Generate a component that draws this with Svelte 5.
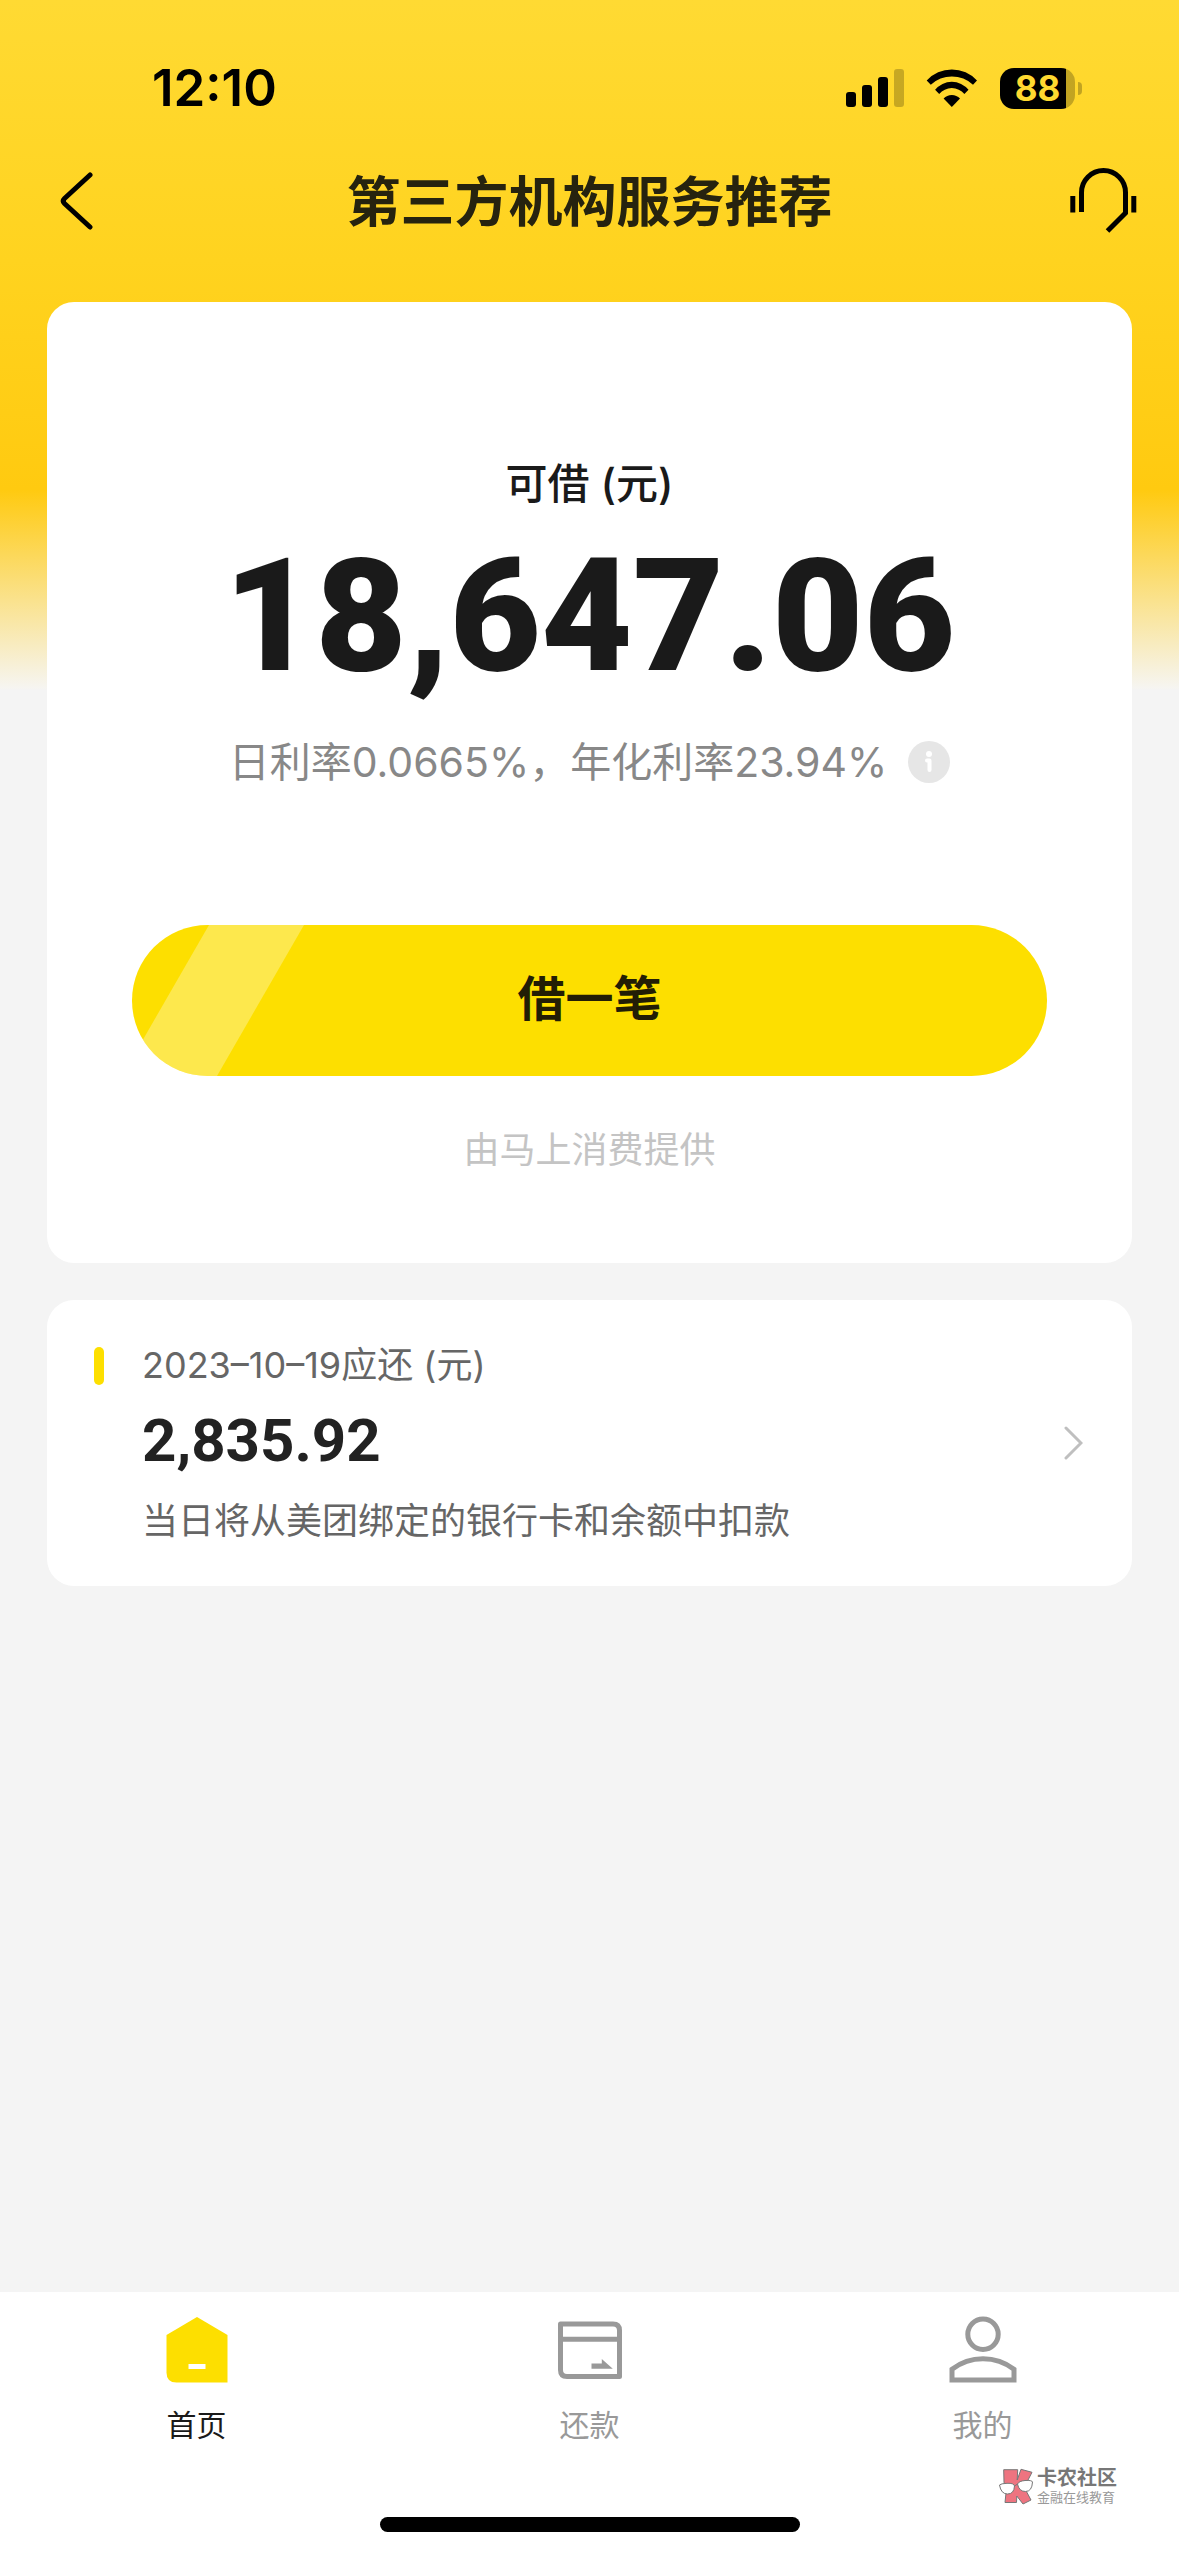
<script>
  const loan = {
    available: '18,647.06',
    daily: '0.0665%',
    yearly: '23.94%',
    provider: '由马上消费提供',
  };
  const bill = { date: '2023–10–19', amount: '2,835.92' };
  const tabs = [
    { id: 'home', label: '首页' },
    { id: 'repay', label: '还款' },
    { id: 'me', label: '我的' },
  ];
  let active = $state('home');
</script>

<div class="page">
  <div class="status">
    <span class="time">12:10</span>
    <div class="indicators">
      <svg class="signal" viewBox="0 0 58 38" aria-hidden="true">
        <rect x="0" y="23" width="10" height="15" rx="3" />
        <rect x="16" y="16" width="10" height="22" rx="3" />
        <rect x="32" y="8" width="10" height="30" rx="3" />
        <rect x="48" y="0" width="10" height="38" rx="3" opacity="0.22" />
      </svg>
      <svg class="wifi" viewBox="0 0 52 38" aria-hidden="true">
        <path d="M.7 11.5A34 34 0 0 1 51 11.5L47 15.8A30.7 30.7 0 0 0 4.8 15.8Z" />
        <path d="M9.1 20.8A21.4 21.4 0 0 1 42.5 20.8L38.4 25A16.4 16.4 0 0 0 13.2 25Z" />
        <path d="M17.6 29.5A11.3 11.3 0 0 1 34 29.5L25.8 38Z" />
      </svg>
      <div class="battery">
        <span class="level">88</span>
        <span class="nub"></span>
      </div>
    </div>
  </div>

  <header>
    <button class="icon-btn" aria-label="返回">
      <svg class="back" viewBox="0 0 34 60" aria-hidden="true">
        <path d="M30 4L4.500 27.500Q2 30 4.500 32.500L30 56" />
      </svg>
    </button>
    <h1>第三方机构服务推荐</h1>
    <button class="icon-btn end" aria-label="客服">
      <svg class="headset" viewBox="0 0 70 70" aria-hidden="true">
        <path d="M13.500 46V26.500A22 22 0 0 1 57.500 26.500V47L39.500 65" />
        <path d="M4.800 30V46.500M65.800 30V46.500" />
      </svg>
    </button>
  </header>

  <main>
    <section class="card loan">
      <p class="caption">可借 (元)</p>
      <p class="available">{loan.available}</p>
      <div class="rate">
        <span>日利率{loan.daily}，年化利率{loan.yearly}</span>
        <button class="icon-btn" aria-label="利率说明">
          <svg class="info" viewBox="0 0 42 42" aria-hidden="true">
            <circle cx="21" cy="21" r="21" fill="#e6e6e6" />
            <circle cx="21" cy="13" r="3" fill="#fff" />
            <path d="M19 19.500H21.500V29" />
          </svg>
        </button>
      </div>
      <button class="borrow">
        <svg class="shine" viewBox="0 0 190 151" aria-hidden="true">
          <path d="M77 0H172L85 151H-10Z" />
        </svg>
        <span>借一笔</span>
      </button>
      <p class="provider">{loan.provider}</p>
    </section>

    <a class="card bill" href="#bill">
      <span class="mark"></span>
      <span class="details">
        <span class="line">{bill.date}应还 (元)</span>
        <span class="due">{bill.amount}</span>
        <span class="line">当日将从美团绑定的银行卡和余额中扣款</span>
      </span>
      <svg class="arrow" viewBox="0 0 20 36" aria-hidden="true">
        <path d="M3 3L18 18L3 33" />
      </svg>
    </a>
  </main>

  <nav>
    <div class="tabs">
      {#each tabs as tab (tab.id)}
        <button class="tab" class:active={active === tab.id} onclick={() => (active = tab.id)}>
          <svg viewBox="0 0 72 72" aria-hidden="true">
            {#if tab.id === 'home'}
              <path class="solid" d="M36 3L66.500 21V68.500H15.500Q5.500 68.500 5.500 58.500V21Z" />
              <path d="M27.500 52.500H44.500" stroke="#fff" />
            {:else if tab.id === 'repay'}
              <path d="M6.500 10H59Q65.500 10 65.500 16.500V62.500H13Q6.500 62.500 6.500 56Z" />
              <path d="M6.500 25.300H65.500" />
              <path class="solid" d="M37.500 49.500H47.800V45L58.800 54.800H37.500Z" />
            {:else}
              <circle cx="36" cy="20.300" r="15.200" />
              <path stroke-linejoin="miter" d="M5 66V55.200A51 51 0 0 1 67 55.200V66Z" />
            {/if}
          </svg>
          <span>{tab.label}</span>
        </button>
      {/each}
    </div>
    <div class="home-indicator"></div>
    <div class="watermark">
      <svg viewBox="0 0 36 37" aria-hidden="true">
        <path
          d="M5.700 1.700H19.700L19.200 12L23 1.300L34 4.300L29 14L26 19L33 32L25 36L18.800 28L18.500 34.500H7L8 25L6 14Z"
          fill="#ee7480"
        />
        <path d="M1.500 17Q3 15.500 9 15.300Q16 15 16.500 18Q16 26 9.500 26Q3 26 1.500 17Z" fill="#fff" />
        <path d="M19.500 16Q21 13 27 12.500Q34 12 34.500 14Q34 23.500 27.500 23.500Q21 23.500 19.500 16Z" fill="#fff" />
        <path d="M16.500 18L19.500 16" />
      </svg>
      <div>
        <strong>卡农社区</strong>
        <small>金融在线教育</small>
      </div>
    </div>
  </nav>
</div>

<style>
  :global(body) {
    margin: 0;
    background: #f4f4f4;
  }

  .page {
    display: flex;
    flex-direction: column;
    min-height: 100vh;
    background: linear-gradient(#ffda33 0, #ffd31f 260px, #ffca10 490px, #f6f5f1 688px, #f4f4f4 690px);
    font-family: Inter, 'Noto Sans CJK SC', sans-serif;
    color: #1a1a1a;
  }

  button {
    margin: 0;
    padding: 0;
    border: 0;
    background: none;
    color: inherit;
    font: inherit;
    cursor: pointer;
  }

  p,
  h1 {
    margin: 0;
  }

  svg {
    display: block;
    flex: none;
  }

  .status {
    display: flex;
    align-items: center;
    justify-content: space-between;
    height: 60px;
    padding: 58px 97px 0 152px;
    color: #000;
  }

  .time {
    font-size: 51px;
    font-weight: 600;
    line-height: 60px;
  }

  .indicators {
    display: flex;
    align-items: center;
    gap: 22px;
  }

  .signal {
    width: 58px;
    height: 38px;
  }

  .wifi {
    width: 52px;
    height: 38px;
  }

  .battery {
    display: flex;
    align-items: center;
    gap: 3px;
  }

  .level {
    width: 75px;
    border-radius: 14px;
    background: linear-gradient(90deg, #000 88%, rgb(0 0 0 / 24%) 88%);
    color: #ffd930;
    font-size: 35px;
    font-weight: 700;
    line-height: 41px;
    text-align: center;
  }

  .nub {
    width: 4px;
    height: 13px;
    border-radius: 0 6px 6px 0;
    background: rgb(0 0 0 / 24%);
  }

  header {
    display: flex;
    align-items: center;
    justify-content: space-between;
    height: 166px;
    padding: 0 41px 0 60px;
  }

  .icon-btn {
    display: flex;
    min-width: 51px;
  }

  header .icon-btn.end {
    min-width: 70px;
  }

  .rate .icon-btn {
    min-width: 42px;
  }

  .back,
  .headset {
    fill: none;
    stroke: #000;
    stroke-width: 5;
  }

  .back {
    width: 34px;
    height: 60px;
    stroke-linecap: round;
  }

  .headset {
    width: 70px;
    height: 70px;
  }

  h1 {
    padding-top: 4px;
    color: #26230f;
    font-size: 54px;
    font-weight: 700;
    line-height: 64px;
  }

  main {
    display: flex;
    flex: 1;
    flex-direction: column;
    gap: 37px;
    padding: 18px 47px 48px;
  }

  .card {
    border-radius: 27px;
    background: #fff;
  }

  .loan {
    display: flex;
    flex-direction: column;
    align-items: center;
    padding: 154px 85px 89px;
  }

  .caption {
    font-size: 42px;
    font-weight: 500;
    line-height: 56px;
  }

  .available {
    margin-top: 24px;
    font-family: Roboto, sans-serif;
    font-size: 158px;
    font-weight: 900;
    line-height: 160px;
  }

  .rate {
    display: flex;
    align-items: center;
    gap: 21px;
    margin-top: 38px;
    color: #888;
    font-size: 41px;
    line-height: 56px;
  }

  .info {
    width: 42px;
    height: 42px;
    fill: none;
    stroke-width: 4;
  }

  .info path {
    stroke: #fff;
    stroke-linecap: round;
    stroke-linejoin: round;
  }

  .info circle {
    stroke: none;
  }

  .borrow {
    position: relative;
    align-self: stretch;
    height: 151px;
    margin-top: 135px;
    padding-bottom: 4px;
    overflow: hidden;
    border-radius: 76px;
    background: #fddf00;
    color: #221d05;
    font-size: 48px;
    font-weight: 700;
    line-height: 56px;
  }

  .shine {
    position: absolute;
    top: 0;
    left: 0;
    height: 100%;
    overflow: visible;
    fill: rgb(255 255 255 / 30%);
  }

  .provider {
    margin-top: 50px;
    color: #c4c4c4;
    font-size: 36px;
    line-height: 48px;
  }

  .bill {
    display: flex;
    align-items: center;
    padding: 41px 49px 41px 47px;
    color: #666;
    text-decoration: none;
  }

  .mark {
    align-self: flex-start;
    width: 10px;
    height: 38px;
    margin-top: 6px;
    border-radius: 5px;
    background: #fddf00;
  }

  .details {
    display: flex;
    flex: 1;
    flex-direction: column;
    margin-left: 38px;
  }

  .line {
    font-size: 36px;
    line-height: 48px;
  }

  .due {
    margin: 20px 0 24px;
    color: #222;
    font-family: Roboto, sans-serif;
    font-size: 60px;
    font-weight: 700;
    line-height: 64px;
  }

  .arrow {
    width: 20px;
    height: 36px;
    fill: none;
    stroke: #bfbfbf;
    stroke-linecap: round;
    stroke-width: 3;
  }

  nav {
    position: relative;
    display: flex;
    flex-direction: column;
    align-items: center;
    gap: 72px;
    padding: 22px 0 24px;
    background: #fff;
  }

  .tabs {
    display: grid;
    grid-template-columns: repeat(3, 1fr);
    align-self: stretch;
  }

  .tab {
    display: flex;
    flex-direction: column;
    align-items: center;
    gap: 19px;
    color: #999;
    font-size: 30px;
    line-height: 40px;
  }

  .tab.active {
    color: #1a1a1a;
  }

  .tab svg {
    width: 72px;
    height: 72px;
    fill: none;
    stroke: #999;
    stroke-linejoin: round;
    stroke-width: 5;
  }

  .tab .solid {
    fill: #999;
    stroke: none;
  }

  .tab.active .solid {
    fill: #fddf00;
  }

  .home-indicator {
    width: 420px;
    height: 15px;
    border-radius: 8px;
    background: #000;
  }

  .watermark {
    position: absolute;
    right: 62px;
    bottom: 51px;
    display: flex;
    align-items: center;
    gap: 3px;
    color: #777;
  }

  .watermark svg {
    width: 36px;
    height: 37px;
    fill: none;
    stroke: #777;
    stroke-width: 1;
  }

  .watermark div {
    display: flex;
    flex-direction: column;
  }

  .watermark strong {
    font-size: 20px;
    font-weight: 700;
    line-height: 22px;
  }

  .watermark small {
    color: #999;
    font-size: 13px;
    line-height: 16px;
  }
</style>
